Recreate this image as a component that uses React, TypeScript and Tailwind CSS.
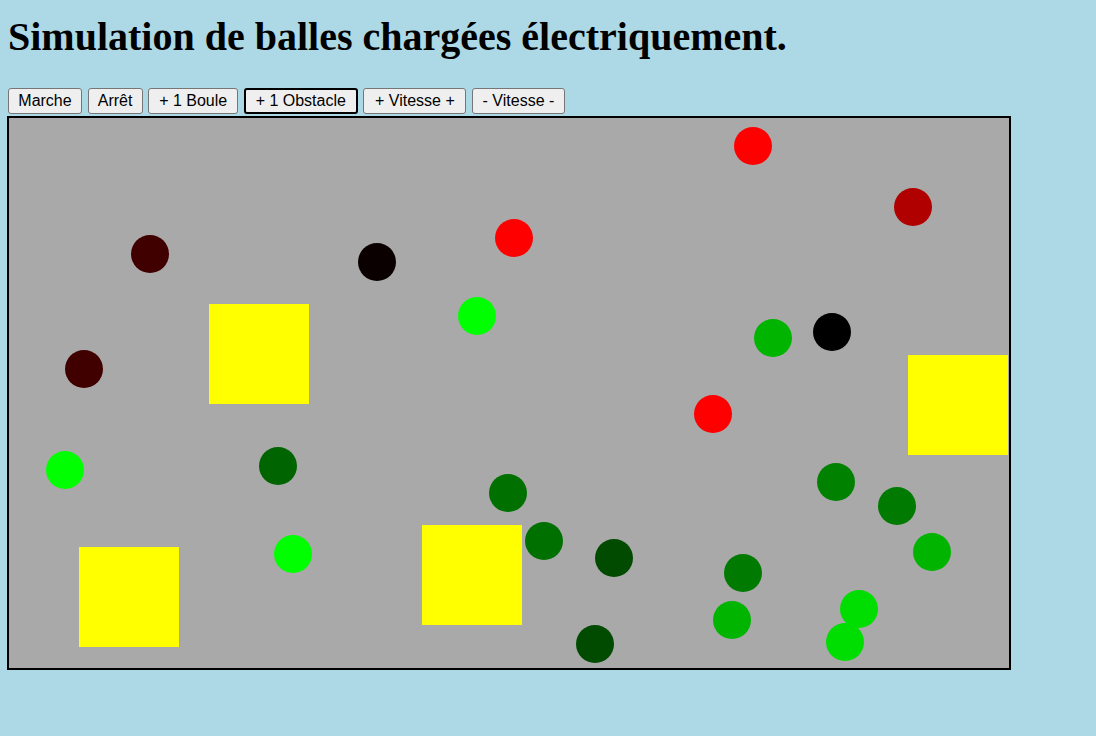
const balls = [
  { x: 744, y: 28, c: "#ff0000" },
  { x: 904, y: 89, c: "#b00000" },
  { x: 505, y: 120, c: "#ff0000" },
  { x: 141, y: 136, c: "#400000" },
  { x: 368, y: 144, c: "#0a0000" },
  { x: 468, y: 198, c: "#00ff00" },
  { x: 764, y: 220, c: "#00b400" },
  { x: 823, y: 214, c: "#000000" },
  { x: 75, y: 251, c: "#400000" },
  { x: 704, y: 296, c: "#ff0000" },
  { x: 56, y: 352, c: "#00ff00" },
  { x: 269, y: 348, c: "#006400" },
  { x: 499, y: 375, c: "#007000" },
  { x: 827, y: 364, c: "#008200" },
  { x: 888, y: 388, c: "#007a00" },
  { x: 923, y: 434, c: "#00b400" },
  { x: 284, y: 436, c: "#00ff00" },
  { x: 535, y: 423, c: "#007000" },
  { x: 605, y: 440, c: "#004b00" },
  { x: 734, y: 455, c: "#007a00" },
  { x: 723, y: 502, c: "#00b400" },
  { x: 850, y: 491, c: "#00dd00" },
  { x: 836, y: 524, c: "#00dd00" },
  { x: 586, y: 526, c: "#004b00" },
];

const obstacles = [
  { x: 200, y: 186 },
  { x: 899, y: 237 },
  { x: 70, y: 429 },
  { x: 413, y: 407 },
];

const buttons = [
  { label: "Marche", w: "w-[74px]" },
  { label: "Arrêt", w: "w-[55px]" },
  { label: "+ 1 Boule", w: "w-[90px]" },
  { label: "+ 1 Obstacle", w: "w-[114px]", focus: true },
  { label: "+ Vitesse +", w: "w-[103px]" },
  { label: "- Vitesse -", w: "w-[93px]" },
];

export default function App() {
  return (
    <div className="min-h-[736px] w-full bg-[#add8e6] pt-[15px]">
      <h1 className="ml-[8px] text-[40px] leading-[44px] font-bold text-black font-['Liberation_Serif',serif]">
        Simulation de balles chargées électriquement.
      </h1>

      <div className="ml-[8px] mt-[29px] flex gap-[5.6px] font-['Liberation_Sans',Arial,sans-serif] text-[16px] leading-[18px] text-black">
        {buttons.map((b) => (
          <button
            key={b.label}
            className={
              b.focus
                ? `${b.w} h-[26px] rounded-[3px] border-2 border-black bg-[#efefef] text-center`
                : `${b.w} h-[26px] rounded-[3px] border border-[#767676] bg-[#efefef] text-center`
            }
          >
            {b.label}
          </button>
        ))}
      </div>

      <div className="ml-[7px] mt-[2px] w-[1004px] border-2 border-black bg-[#a9a9a9]">
        <svg width="1000" height="550" className="block">
          {obstacles.map((o, i) => (
            <rect key={i} x={o.x} y={o.y} width="100" height="100" fill="#ffff00" />
          ))}
          {balls.map((b, i) => (
            <circle key={i} cx={b.x} cy={b.y} r="19" fill={b.c} />
          ))}
        </svg>
      </div>
    </div>
  );
}
